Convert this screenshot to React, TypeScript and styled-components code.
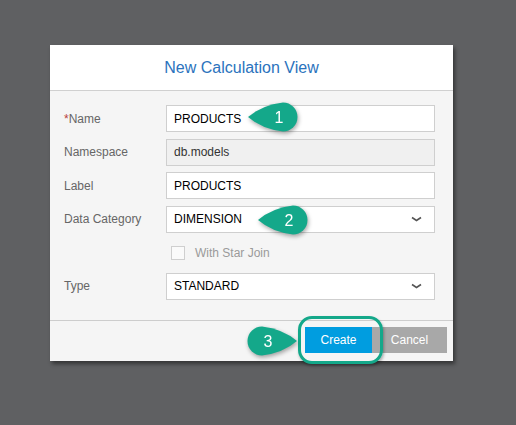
import React from "react";
import styled, { createGlobalStyle } from "styled-components";

const GlobalStyle = createGlobalStyle`
    html, body {
        margin: 0;
        padding: 0;
        background: #5f6062;
        font-family: "Liberation Sans", Arial, sans-serif;
    }
`;

const Page = styled.div`
    width: 516px;
    height: 425px;
    padding: 45px 0 0 50px;
    box-sizing: border-box;
`;

const Dialog = styled.div`
    position: relative;
    width: 403px;
    background: #f5f5f5;
    box-shadow: 2px 3px 4px rgba(0, 0, 0, 0.45);
`;

const Header = styled.div`
    height: 45px;
    background: #fff;
    border-bottom: 1px solid #d0d0d0;
    display: flex;
    align-items: center;
    justify-content: center;
    padding-right: 20px;
    color: #2b73bd;
    font-size: 16px;
`;

const Body = styled.div`
    display: grid;
    grid-template-columns: 102px 269px;
    grid-auto-rows: 27px;
    row-gap: 6.6px;
    padding: 14px 18px 20px 14px;
    align-items: center;
`;

const Label = styled.label`
    font-size: 12px;
    color: #666;
`;

const Required = styled.span`
    color: #b8413b;
`;

const Field = styled.div<{ $disabled?: boolean }>`
    height: 27px;
    box-sizing: border-box;
    border: 1px solid #cfcfcf;
    background: ${(p) => (p.$disabled ? "#f0f0f0" : "#fff")};
    display: flex;
    align-items: center;
    justify-content: space-between;
    padding: 0 12px 0 7px;
    font-size: 12px;
    color: ${(p) => (p.$disabled ? "#333" : "#000")};
`;

const CheckRow = styled.div`
    grid-column: 2;
    display: flex;
    align-items: center;
    gap: 10px;
    padding-left: 5px;
    font-size: 12px;
    color: #9a9a9a;
`;

const Box = styled.span`
    width: 12px;
    height: 12px;
    border: 1px solid #cfcfcf;
    background: #fafafa;
`;

const Footer = styled.div`
    border-top: 1px solid #cdcdcd;
    display: flex;
    justify-content: flex-end;
    padding: 6px 6px 8px 0;
`;

const Button = styled.button<{ $primary?: boolean }>`
    height: 26px;
    border: none;
    padding: 0;
    width: ${(p) => (p.$primary ? "67px" : "75px")};
    background: ${(p) => (p.$primary ? "#009de0" : "#a8a8a8")};
    color: #fff;
    font-family: "Liberation Sans", Arial, sans-serif;
    font-size: 12px;
`;

const Highlight = styled.div`
    position: relative;
    display: flex;
`;

const Ring = styled.div`
    position: absolute;
    left: -7px;
    right: -11px;
    top: -11px;
    bottom: -11px;
    border: 3px solid #14a88a;
    border-radius: 14px;
    box-shadow: 1px 2px 3px rgba(0, 0, 0, 0.3);
`;

const CalloutWrap = styled.div<{ $x: number; $y: number }>`
    position: absolute;
    left: ${(p) => p.$x}px;
    top: ${(p) => p.$y}px;
    width: 50px;
    height: 30px;
    filter: drop-shadow(1px 2px 2px rgba(0, 0, 0, 0.35));
`;

const Chevron = () => (
    <svg width="11" height="6" viewBox="0 0 11 6">
        <path d="M1 1.5 L5.5 4.5 L10 1.5" fill="none" stroke="#555" strokeWidth="1.6" />
    </svg>
);

const Callout = ({ n, x, y, right }: { n: number; x: number; y: number; right?: boolean }) => (
    <CalloutWrap $x={x} $y={y}>
        <svg width="50" height="30" viewBox="0 0 50 30">
            <g transform={right ? "translate(50 0) scale(-1 1)" : undefined}>
                <path
                    d="M0 15 Q14 3 35 0.5 A14.5 14.5 0 0 1 35 29.5 Q14 27 0 15 Z"
                    fill="#14a88a"
                />
            </g>
            <text
                x={right ? 21 : 31}
                y="21"
                textAnchor="middle"
                fill="#fff"
                fontSize="16"
                fontFamily="Liberation Sans, Arial, sans-serif"
            >
                {n}
            </text>
        </svg>
    </CalloutWrap>
);

const App = () => {
    return (
        <Page>
            <GlobalStyle />
            <Dialog>
                <Header>New Calculation View</Header>
                <Body>
                    <Label>
                        <Required>*</Required>Name
                    </Label>
                    <Field>PRODUCTS</Field>
                    <Label>Namespace</Label>
                    <Field $disabled>db.models</Field>
                    <Label>Label</Label>
                    <Field>PRODUCTS</Field>
                    <Label>Data Category</Label>
                    <Field>
                        DIMENSION
                        <Chevron />
                    </Field>
                    <CheckRow>
                        <Box />
                        With Star Join
                    </CheckRow>
                    <Label>Type</Label>
                    <Field>
                        STANDARD
                        <Chevron />
                    </Field>
                </Body>
                <Footer>
                    <Highlight>
                        <Button $primary>Create</Button>
                        <Ring />
                    </Highlight>
                    <Button>Cancel</Button>
                </Footer>
                <Callout n={1} x={198} y={57} />
                <Callout n={2} x={208} y={160} />
                <Callout n={3} x={197} y={281} right />
            </Dialog>
        </Page>
    );
};

export default App;
